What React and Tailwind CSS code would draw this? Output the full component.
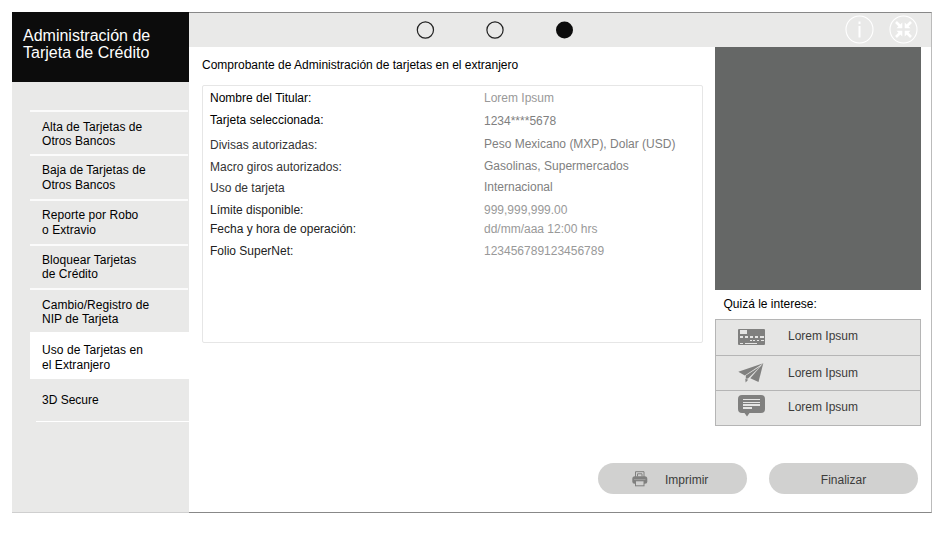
const MENU = [
  { lines: ['Alta de Tarjetas de', 'Otros Bancos'], cls: 'h-[44px] pt-[8px] leading-[14px]' },
  { lines: ['Baja de Tarjetas de', 'Otros Bancos'], cls: 'h-[45px] pt-[7px] leading-[15px]' },
  { lines: ['Reporte por Robo', 'o Extravio'], cls: 'h-[45px] pt-[7px] leading-[15px]' },
  { lines: ['Bloquear Tarjetas', 'de Crédito'], cls: 'h-[44px] pt-[7px] leading-[14px]' },
  { lines: ['Cambio/Registro de', 'NIP de Tarjeta'], cls: 'h-[44px] pt-[8px] leading-[14px]' },
];

const LABELS = [
  ['Nombre del Titular:', 'text-black'],
  ['Tarjeta seleccionada:', 'mt-[8px] text-black tracking-[0.040px]'],
  ['Divisas autorizadas:', 'mt-[11px] text-[#333]'],
  ['Macro giros autorizados:', 'mt-[8px] text-[#333] tracking-[0.020px]'],
  ['Uso de tarjeta', 'mt-[7px] text-[#333]'],
  ['Límite disponible:', 'mt-[8px] text-[#222]'],
  ['Fecha y hora de operación:', 'mt-[5px] text-[#222]'],
  ['Folio SuperNet:', 'mt-[8px] text-[#222]'],
];

const VALUES = [
  ['Lorem Ipsum', 'text-[#999]'],
  ['1234****5678', 'mt-[9px] text-[#808080]'],
  ['Peso Mexicano (MXP), Dolar (USD)', 'mt-[9px] text-[#808080]'],
  ['Gasolinas, Supermercados', 'mt-[8px] text-[#808080]'],
  ['Internacional', 'mt-[7px] text-[#808080]'],
  ['999,999,999.00', 'mt-[9px] text-[#999]'],
  ['dd/mm/aaa 12:00 hrs', 'mt-[5px] text-[#999]'],
  ['123456789123456789', 'mt-[8px] text-[#999]'],
];

function CardIcon() {
  return (
    <svg width="27" height="16" viewBox="0 0 27 16" className="shrink-0">
      <rect width="27" height="16" rx="1" fill="#80807f" />
      <g fill="#e5e5e4">
        <rect x="2" y="1" width="7" height="4" />
        <path d="M2 7h3v2h-3zM7 7h3v2h-3zM12 7h3v2h-3zM17 7h3v2h-3zM22 7h4v2h-4z" />
        <path d="M12 11h2v1h-2zM15 11h2v1h-2zM19 11h2v1h-2zM23 11h3v1h-3z" />
        <path d="M2 14h3v1h-3zM7 14h12v1h-12z" />
      </g>
    </svg>
  );
}

function PlaneIcon() {
  return (
    <svg width="27" height="20" viewBox="0 0 27 20" className="shrink-0" fill="#80807f">
      <path d="M25.300 0.300L0.300 8.800l6.500 3.700z" />
      <path d="M22.500 3.200L7.800 12.500v3.200l2.200-.2z" />
      <path d="M25.300 0.300L12.300 15.300l8.200 3.800z" />
      <path d="M7.300 15.800l2.900 1-2.600 2.700z" />
    </svg>
  );
}

function ChatIcon() {
  return (
    <svg width="27" height="22" viewBox="0 0 27 22" className="shrink-0">
      <path d="M4 0h19q4 0 4 4v10q0 4-4 4H11.500L9 21.500 6.500 18H4q-4 0-4-4V4q0-4 4-4z" fill="#80807f" />
      <path d="M5 4h17v1H5zM5 7h17v1H5zM5 9h17v2H5zM5 12h9v2H5z" fill="#e5e5e4" />
    </svg>
  );
}

function PrinterIcon() {
  return (
    <svg width="16" height="16" viewBox="0 0 16 16" fill="none">
      <path d="M3.500 6V0.700h8.500V6" stroke="#80807f" />
      <path d="M5.500 5.500V2.800h4.500v2.700" stroke="#80807f" />
      <rect x="0.300" y="5.300" width="15" height="7.500" rx="2.500" fill="#80807f" />
      <path d="M2 8.500h11.500" stroke="#a8a8a7" strokeWidth="0.700" />
      <rect x="3.500" y="9.800" width="8.500" height="5" fill="#d1d1d0" stroke="#80807f" />
    </svg>
  );
}

const OFFERS = [
  { Icon: CardIcon, box: 'h-[36px] border-b pt-[9px]', text: '' },
  { Icon: PlaneIcon, box: 'h-[35px] border-b pt-[7px]', text: 'mt-[3px]' },
  { Icon: ChatIcon, box: 'h-[34px] pt-[4px]', text: 'mt-[5px]' },
];

export default function App() {
  return (
    <div className="h-[550px] w-[932px] overflow-hidden bg-white pl-[12px] pt-[12px] font-['Liberation_Sans',Arial,sans-serif] text-[12px] leading-[14px] text-black">
      <div className="flex h-[501px] w-[920px]">
        <aside className="flex w-[177px] flex-col border-b border-[#cfcfcf] bg-[#e9e9e8]">
          <h1 className="h-[70px] bg-[#0c0c0c] pl-[11px] pt-[15px] text-[16px] leading-[17px] text-white">
            Administración de
            <br />
            Tarjeta de Crédito
          </h1>
          <nav className="ml-[18px] mt-[28px] tracking-[0.060px]">
            {MENU.map((item) => (
              <div key={item.lines[0]} className={`mr-px whitespace-nowrap border-t-2 border-[#fbfbfb] pl-[12px] ${item.cls}`}>
                {item.lines[0]}
                <br />
                {item.lines[1]}
              </div>
            ))}
            <div className="h-[47px] bg-white pl-[12px] pt-[11px] leading-[15px]">
              Uso de Tarjetas en
              <br />
              el Extranjero
            </div>
            <div className="ml-[6px] h-[43px] border-b border-white pl-[6px] pt-[14px] tracking-normal">3D Secure</div>
          </nav>
        </aside>

        <div className="flex w-[743px] flex-col border-b border-r border-t border-b-[#888] border-r-[#bbb] border-t-[#888]">
          <header className="flex h-[34px] shrink-0 items-center bg-[#e9e9e8] pl-[227px]">
            <svg width="160" height="20" viewBox="0 0 160 20" fill="none" stroke="#222" strokeWidth="1.200">
              <circle cx="9.400" cy="10" r="8.100" />
              <circle cx="79" cy="10" r="8.100" />
              <circle cx="148.500" cy="10" r="8.500" fill="#0c0c0c" stroke="none" />
            </svg>
            <div className="ml-auto mr-[13px] flex gap-[15px] pb-px">
              <svg width="29" height="29" viewBox="0 0 29 29" fill="none" stroke="#fff">
                <circle cx="14.500" cy="14.500" r="13.500" strokeWidth="1.100" />
                <path d="M14.500 11v11.500M14.500 6.500v2.500" strokeWidth="2" />
              </svg>
              <svg width="29" height="29" viewBox="0 0 29 29" fill="none" stroke="#fff">
                <circle cx="14.500" cy="14.500" r="13.500" strokeWidth="1.100" />
                <path d="M7 7l4.500 4.500M22 7l-4.500 4.500M7 22l4.500-4.500M22 22l-4.500-4.500" strokeWidth="2.600" />
                <path d="M13.300 7.500v5.800h-5.800zM15.700 7.500v5.800h5.800zM13.300 21.500v-5.800h-5.800zM15.700 21.500v-5.800h5.800z" fill="#fff" stroke="none" />
              </svg>
            </div>
          </header>

          <div className="flex">
            <main className="w-[526px] pl-[13px] pt-[11px]">
              <h2 className="whitespace-nowrap">Comprobante de Administración de tarjetas en el extranjero</h2>
              <section className="mt-[13px] flex h-[258px] w-[501px] rounded-[2px] border border-[#e6e6e6] pl-[7px] pt-[5px]">
                <div className="w-[274px]">
                  {LABELS.map(([t, c]) => (
                    <div key={t} className={c}>{t}</div>
                  ))}
                </div>
                <div>
                  {VALUES.map(([t, c]) => (
                    <div key={t} className={`whitespace-nowrap ${c}`}>{t}</div>
                  ))}
                </div>
              </section>
            </main>

            <aside className="w-[206px]">
              <div className="h-[243px] bg-[#656766]" />
              <h3 className="mt-[7px] pl-[8.500px]">Quizá le interese:</h3>
              <div className="mt-[8px] border border-[#b5b5b5] bg-[#e5e5e4]">
                {OFFERS.map(({ Icon, box, text }, i) => (
                  <div key={i} className={`flex items-start border-[#b5b5b5] pl-[22px] text-[#3c3c3b] ${box}`}>
                    <Icon />
                    <span className={`ml-[23px] ${text}`}>Lorem Ipsum</span>
                  </div>
                ))}
              </div>
            </aside>
          </div>

          <footer className="mb-[18px] ml-auto mr-[13px] mt-auto flex gap-[22px] text-[#3c3c3b]">
            <button className="flex h-[31px] w-[149px] items-center rounded-full bg-[#d1d1d0] pl-[34px]">
              <PrinterIcon />
              <span className="ml-[17px] mt-[3px]">Imprimir</span>
            </button>
            <button className="flex h-[31px] w-[149px] items-center justify-center rounded-full bg-[#d1d1d0]">
              <span className="mt-[3px]">Finalizar</span>
            </button>
          </footer>
        </div>
      </div>
    </div>
  );
}
